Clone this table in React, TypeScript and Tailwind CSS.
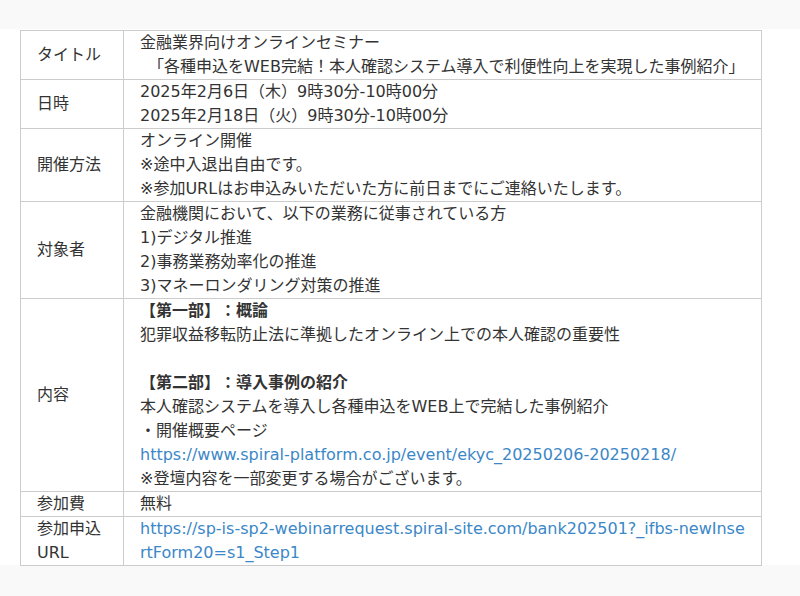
import React from "react";

const rows: { label: string; lines: React.ReactNode[] }[] = [
  {
    label: "タイトル",
    lines: [
      "金融業界向けオンラインセミナー",
      <span key="t2" className="pl-2">
        「各種申込をWEB完結！本人確認システム導入で利便性向上を実現した事例紹介」
      </span>,
    ],
  },
  {
    label: "日時",
    lines: [
      "2025年2月6日（木）9時30分-10時00分",
      "2025年2月18日（火）9時30分-10時00分",
    ],
  },
  {
    label: "開催方法",
    lines: [
      "オンライン開催",
      "※途中入退出自由です。",
      "※参加URLはお申込みいただいた方に前日までにご連絡いたします。",
    ],
  },
  {
    label: "対象者",
    lines: [
      "金融機関において、以下の業務に従事されている方",
      "1)デジタル推進",
      "2)事務業務効率化の推進",
      "3)マネーロンダリング対策の推進",
    ],
  },
  {
    label: "内容",
    lines: [
      <b key="b1">【第一部】：概論</b>,
      "犯罪収益移転防止法に準拠したオンライン上での本人確認の重要性",
      "\u00a0",
      <b key="b2">【第二部】：導入事例の紹介</b>,
      "本人確認システムを導入し各種申込をWEB上で完結した事例紹介",
      "・開催概要ページ",
      <a key="a1" href="#" className="text-[#3b87c7]">
        https://www.spiral-platform.co.jp/event/ekyc_20250206-20250218/
      </a>,
      "※登壇内容を一部変更する場合がございます。",
    ],
  },
  { label: "参加費", lines: ["無料"] },
  {
    label: "参加申込URL",
    lines: [
      <a key="a2" href="#" className="text-[#3b87c7] break-all">
        https://sp-is-sp2-webinarrequest.spiral-site.com/bank202501?_ifbs-newInsertForm20=s1_Step1
      </a>,
    ],
  },
];

export default function App() {
  return (
    <div className="min-h-[596px] bg-[#f9f9f9] pt-[29px] font-['DejaVu_Sans','Noto_Sans_CJK_JP',sans-serif] text-[16px] leading-6 text-[#333] [text-spacing-trim:space-all]">
      <div className="bg-white h-[536px] pl-5 pt-px">
        <table className="w-[742px] border-collapse border border-[#ccc]">
          <tbody>
            {rows.map((r) => (
              <tr key={r.label}>
                <td className="w-[103px] border border-[#ccc] px-4 align-middle">
                  {r.label}
                </td>
                <td className="border border-[#ccc] pl-4 pr-3 align-top">
                  {r.lines.map((l, i) => (
                    <div key={i}>{l}</div>
                  ))}
                </td>
              </tr>
            ))}
          </tbody>
        </table>
      </div>
    </div>
  );
}
